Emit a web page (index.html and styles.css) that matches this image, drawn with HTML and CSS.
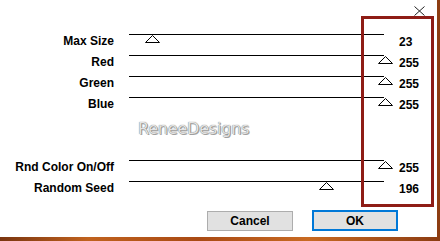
FILE: index.html
```html
<!DOCTYPE html>
<html>
<head>
    <title>Settings</title>
    <link rel="stylesheet" href="styles.css">
</head>
<body>
    <div class="dialog">
        <svg class="close" width="11" height="10" viewBox="0 0 11 10">
            <path d="M0.5 0.5 L10.5 9.5 M10.5 0.5 L0.5 9.5" stroke="#222" stroke-width="1" fill="none"/>
        </svg>

        <div class="params">
            <div class="label">Max Size</div>
            <div class="track"><svg class="thumb" style="left: 16px" width="15" height="8"><polygon points="7.5,0.5 14.5,7.5 0.5,7.5"/></svg></div>
            <div class="value">23</div>

            <div class="label">Red</div>
            <div class="track"><svg class="thumb" style="left: 249px" width="15" height="8"><polygon points="7.5,0.5 14.5,7.5 0.5,7.5"/></svg></div>
            <div class="value">255</div>

            <div class="label">Green</div>
            <div class="track"><svg class="thumb" style="left: 249px" width="15" height="8"><polygon points="7.5,0.5 14.5,7.5 0.5,7.5"/></svg></div>
            <div class="value">255</div>

            <div class="label">Blue</div>
            <div class="track"><svg class="thumb" style="left: 249px" width="15" height="8"><polygon points="7.5,0.5 14.5,7.5 0.5,7.5"/></svg></div>
            <div class="value">255</div>

            <div class="spacer"></div>

            <div class="label">Rnd Color On/Off</div>
            <div class="track"><svg class="thumb" style="left: 249px" width="15" height="8"><polygon points="7.5,0.5 14.5,7.5 0.5,7.5"/></svg></div>
            <div class="value">255</div>

            <div class="label">Random Seed</div>
            <div class="track"><svg class="thumb" style="left: 190px" width="15" height="8"><polygon points="7.5,0.5 14.5,7.5 0.5,7.5"/></svg></div>
            <div class="value">196</div>
        </div>

        <div class="watermark">ReneeDesigns</div>

        <div class="buttons">
            <button class="btn">Cancel</button>
            <button class="btn btn-default">OK</button>
        </div>

        <div class="highlight"></div>
    </div>
</body>
</html>
```

FILE: styles.css
```css
body {
    margin: 0;
    width: 440px;
    height: 241px;
    overflow: hidden;
    background: linear-gradient(90deg, #7a3510, #c0621e 20%, #a94a14 45%, #c86a22 70%, #8c3c12);
    font-family: 'Liberation Sans', Arial, sans-serif;
}

.dialog {
    position: relative;
    width: 437px;
    height: 237px;
    background: #fff;
    box-sizing: border-box;
    padding-top: 34px;
}

.close {
    position: absolute;
    left: 414px;
    top: 6px;
}

.params {
    display: grid;
    grid-template-columns: 114px 255px auto;
    grid-auto-rows: 21px;
    column-gap: 15px;
}

.label {
    text-align: right;
    font-size: 12px;
    font-weight: bold;
    line-height: 14px;
    color: #000;
}

.value {
    font-size: 12px;
    font-weight: bold;
    line-height: 14px;
    color: #000;
    padding-top: 1px;
}

.track {
    position: relative;
    border-top: 1px solid #000;
}

.thumb {
    position: absolute;
    top: 0;
}

.thumb polygon {
    fill: #fff;
    stroke: #000;
    stroke-width: 1;
}

.spacer {
    grid-column: 1 / -1;
    grid-row: span 2;
}

.watermark {
    position: absolute;
    left: 138px;
    top: 119px;
    font-family: 'DejaVu Sans', sans-serif;
    font-size: 16px;
    letter-spacing: -0.2px;
    color: #e4e4e4;
    text-shadow: 0 0 1px #555, 1px 1px 0 #a8a8a8;
}

.buttons {
    display: flex;
    gap: 19px;
    padding: 9px 0 0 207px;
}

.btn {
    width: 86px;
    height: 20px;
    padding: 0;
    font-family: 'Liberation Sans', Arial, sans-serif;
    font-size: 12px;
    font-weight: bold;
    color: #000;
    background: #e1e1e1;
    border: 1px solid #adadad;
}

.btn-default {
    height: 21px;
    margin-top: -1px;
    border: 2px solid #0078d7;
}

.highlight {
    position: absolute;
    left: 361px;
    top: 16px;
    width: 73px;
    height: 191px;
    box-sizing: border-box;
    border: 3px solid #8e1c16;
}
```
